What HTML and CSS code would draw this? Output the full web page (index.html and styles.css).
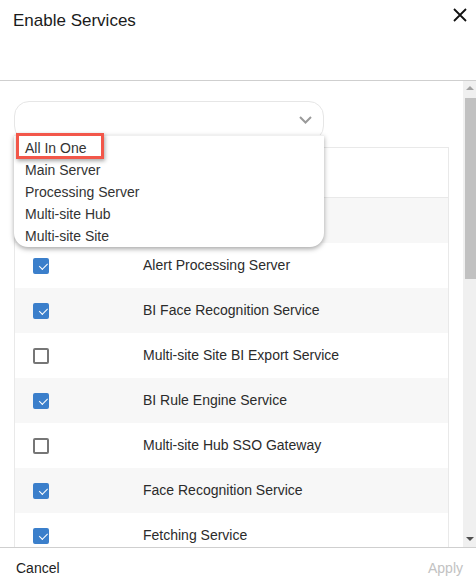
FILE: index.html
```html
<!DOCTYPE html>
<html>
<head>
<meta charset="utf-8">
<link rel="stylesheet" href="styles.css">
</head>
<body>
<div class="dialog">
  <div class="header">
    <div class="title">Enable Services</div>
    <svg class="close" width="14" height="14" viewBox="0 0 14 14"><path d="M1 1L13 13M13 1L1 13" stroke="#111" stroke-width="1.8" fill="none"/></svg>
  </div>
  <div class="body">
    <div class="content">
      <div class="select-wrap">
        <div class="select">
          <svg class="chev" width="13" height="8" viewBox="0 0 13 8"><path d="M1 1L6.5 6.5L12 1" stroke="#9a9a9a" stroke-width="2" fill="none"/></svg>
        </div>
        <div class="menu">
          <div class="opt">All In One</div>
          <div class="opt">Main Server</div>
          <div class="opt">Processing Server</div>
          <div class="opt">Multi-site Hub</div>
          <div class="opt">Multi-site Site</div>
        </div>
        <div class="mark"></div>
      </div>
      <div class="table">
        <div class="thead"><span class="hcell">Service</span></div>
        <div class="row alt"><span class="cb on"></span><span class="name">Alarm Service</span></div>
        <div class="row"><span class="cb on"></span><span class="name">Alert Processing Server</span></div>
        <div class="row alt"><span class="cb on"></span><span class="name">BI Face Recognition Service</span></div>
        <div class="row"><span class="cb"></span><span class="name">Multi-site Site BI Export Service</span></div>
        <div class="row alt"><span class="cb on"></span><span class="name">BI Rule Engine Service</span></div>
        <div class="row"><span class="cb"></span><span class="name">Multi-site Hub SSO Gateway</span></div>
        <div class="row alt"><span class="cb on"></span><span class="name">Face Recognition Service</span></div>
        <div class="row"><span class="cb on"></span><span class="name">Fetching Service</span></div>
      </div>
    </div>
    <div class="scrollbar">
      <div class="arrow up"></div>
      <div class="track"><div class="thumb"></div></div>
      <div class="arrow down"></div>
    </div>
  </div>
  <div class="footer">
    <span class="cancel">Cancel</span>
    <span class="apply">Apply</span>
  </div>
</div>
</body>
</html>
```
FILE: styles.css
```css
html, body {
  margin: 0;
  padding: 0;
  background: #fff;
}
body {
  font-family: "Liberation Sans", Arial, sans-serif;
  color: #333;
}
.dialog {
  width: 476px;
  height: 585px;
  display: flex;
  flex-direction: column;
  overflow: hidden;
}
.header {
  height: 80px;
  border-bottom: 1px solid #cfcfcf;
  display: flex;
  justify-content: space-between;
  align-items: flex-start;
  flex-shrink: 0;
}
.title {
  font-size: 17px;
  color: #1a1a1a;
  padding: 11px 0 0 13px;
}
.close {
  margin: 8px 9px 0 0;
}
.body {
  height: 466px;
  display: flex;
  flex-shrink: 0;
}
.content {
  flex: 1;
  padding: 20px 14px 0 14px;
  overflow: hidden;
}
.select-wrap {
  position: relative;
  width: 310px;
}
.select {
  height: 40px;
  box-sizing: border-box;
  border: 1px solid #e6e6e6;
  border-radius: 15px;
  display: flex;
  justify-content: flex-end;
  align-items: center;
  padding-right: 11px;
}
.chev {
  margin-top: -2px;
}
.menu {
  position: absolute;
  top: 34px;
  left: 0;
  width: 310px;
  box-sizing: border-box;
  background: #fff;
  padding: 2px 0 0 0;
  height: 112px;
  border-radius: 0 0 14px 14px;
  box-shadow: 0 2px 5px rgba(0,0,0,0.35);
  z-index: 3;
  border-top: 1px solid #f0f0f0;
}
.opt {
  height: 22px;
  line-height: 21px;
  font-size: 14px;
  color: #333;
  padding-left: 11px;
}
.mark {
  position: absolute;
  top: 32px;
  left: 2px;
  width: 82px;
  height: 20px;
  border: 3px solid #f2574a;
  box-shadow: 1px 2px 4px rgba(0,0,0,0.35);
  z-index: 4;
}
.table {
  margin-top: 6px;
  border: 1px solid #e9e9e9;
  border-bottom: none;
}
.thead {
  height: 49px;
  border-bottom: 1px solid #e9e9e9;
  display: flex;
  align-items: center;
  padding-left: 129px;
  font-size: 14px;
  color: #333;
}
.row {
  height: 45px;
  display: flex;
  align-items: center;
  background: #fff;
  font-size: 14px;
}
.row.alt {
  background: #f7f7f7;
}
.cb {
  width: 16px;
  height: 16px;
  box-sizing: border-box;
  margin-left: 18px;
  border: 2px solid #767676;
  border-radius: 2px;
  flex-shrink: 0;
  position: relative;
}
.cb.on {
  background: #3b7fcb;
  border-color: #3b7fcb;
}
.cb.on::after {
  content: "";
  position: absolute;
  left: 3px;
  top: 0px;
  width: 7px;
  height: 4px;
  border-left: 1.6px solid #fff;
  border-bottom: 1.6px solid #fff;
  transform: rotate(-45deg) translate(-1px, 3px);
}
.name {
  margin-left: 94px;
  margin-bottom: 2px;
  color: #2b2b2b;
}
.scrollbar {
  width: 13px;
  background: #f0f0f0;
  display: flex;
  flex-direction: column;
  align-items: flex-end;
  flex-shrink: 0;
}
.arrow {
  width: 0;
  height: 0;
  border-left: 4px solid transparent;
  border-right: 4px solid transparent;
  margin-right: 2px;
}
.arrow.up {
  border-bottom: 4px solid #a3a3a3;
  margin-top: 5px;
  margin-bottom: 8px;
}
.arrow.down {
  border-top: 4px solid #505050;
  margin-bottom: 6px;
}
.track {
  flex: 1;
  width: 11px;
}
.thumb {
  width: 11px;
  height: 181px;
  background: #c1c1c1;
}
.footer {
  flex: 1;
  border-top: 1px solid #cfcfcf;
  display: flex;
  justify-content: space-between;
  align-items: center;
  padding: 2px 13px 0 16px;
  font-size: 14px;
}
.cancel {
  color: #222;
}
.apply {
  color: #c2c2c2;
}
```
